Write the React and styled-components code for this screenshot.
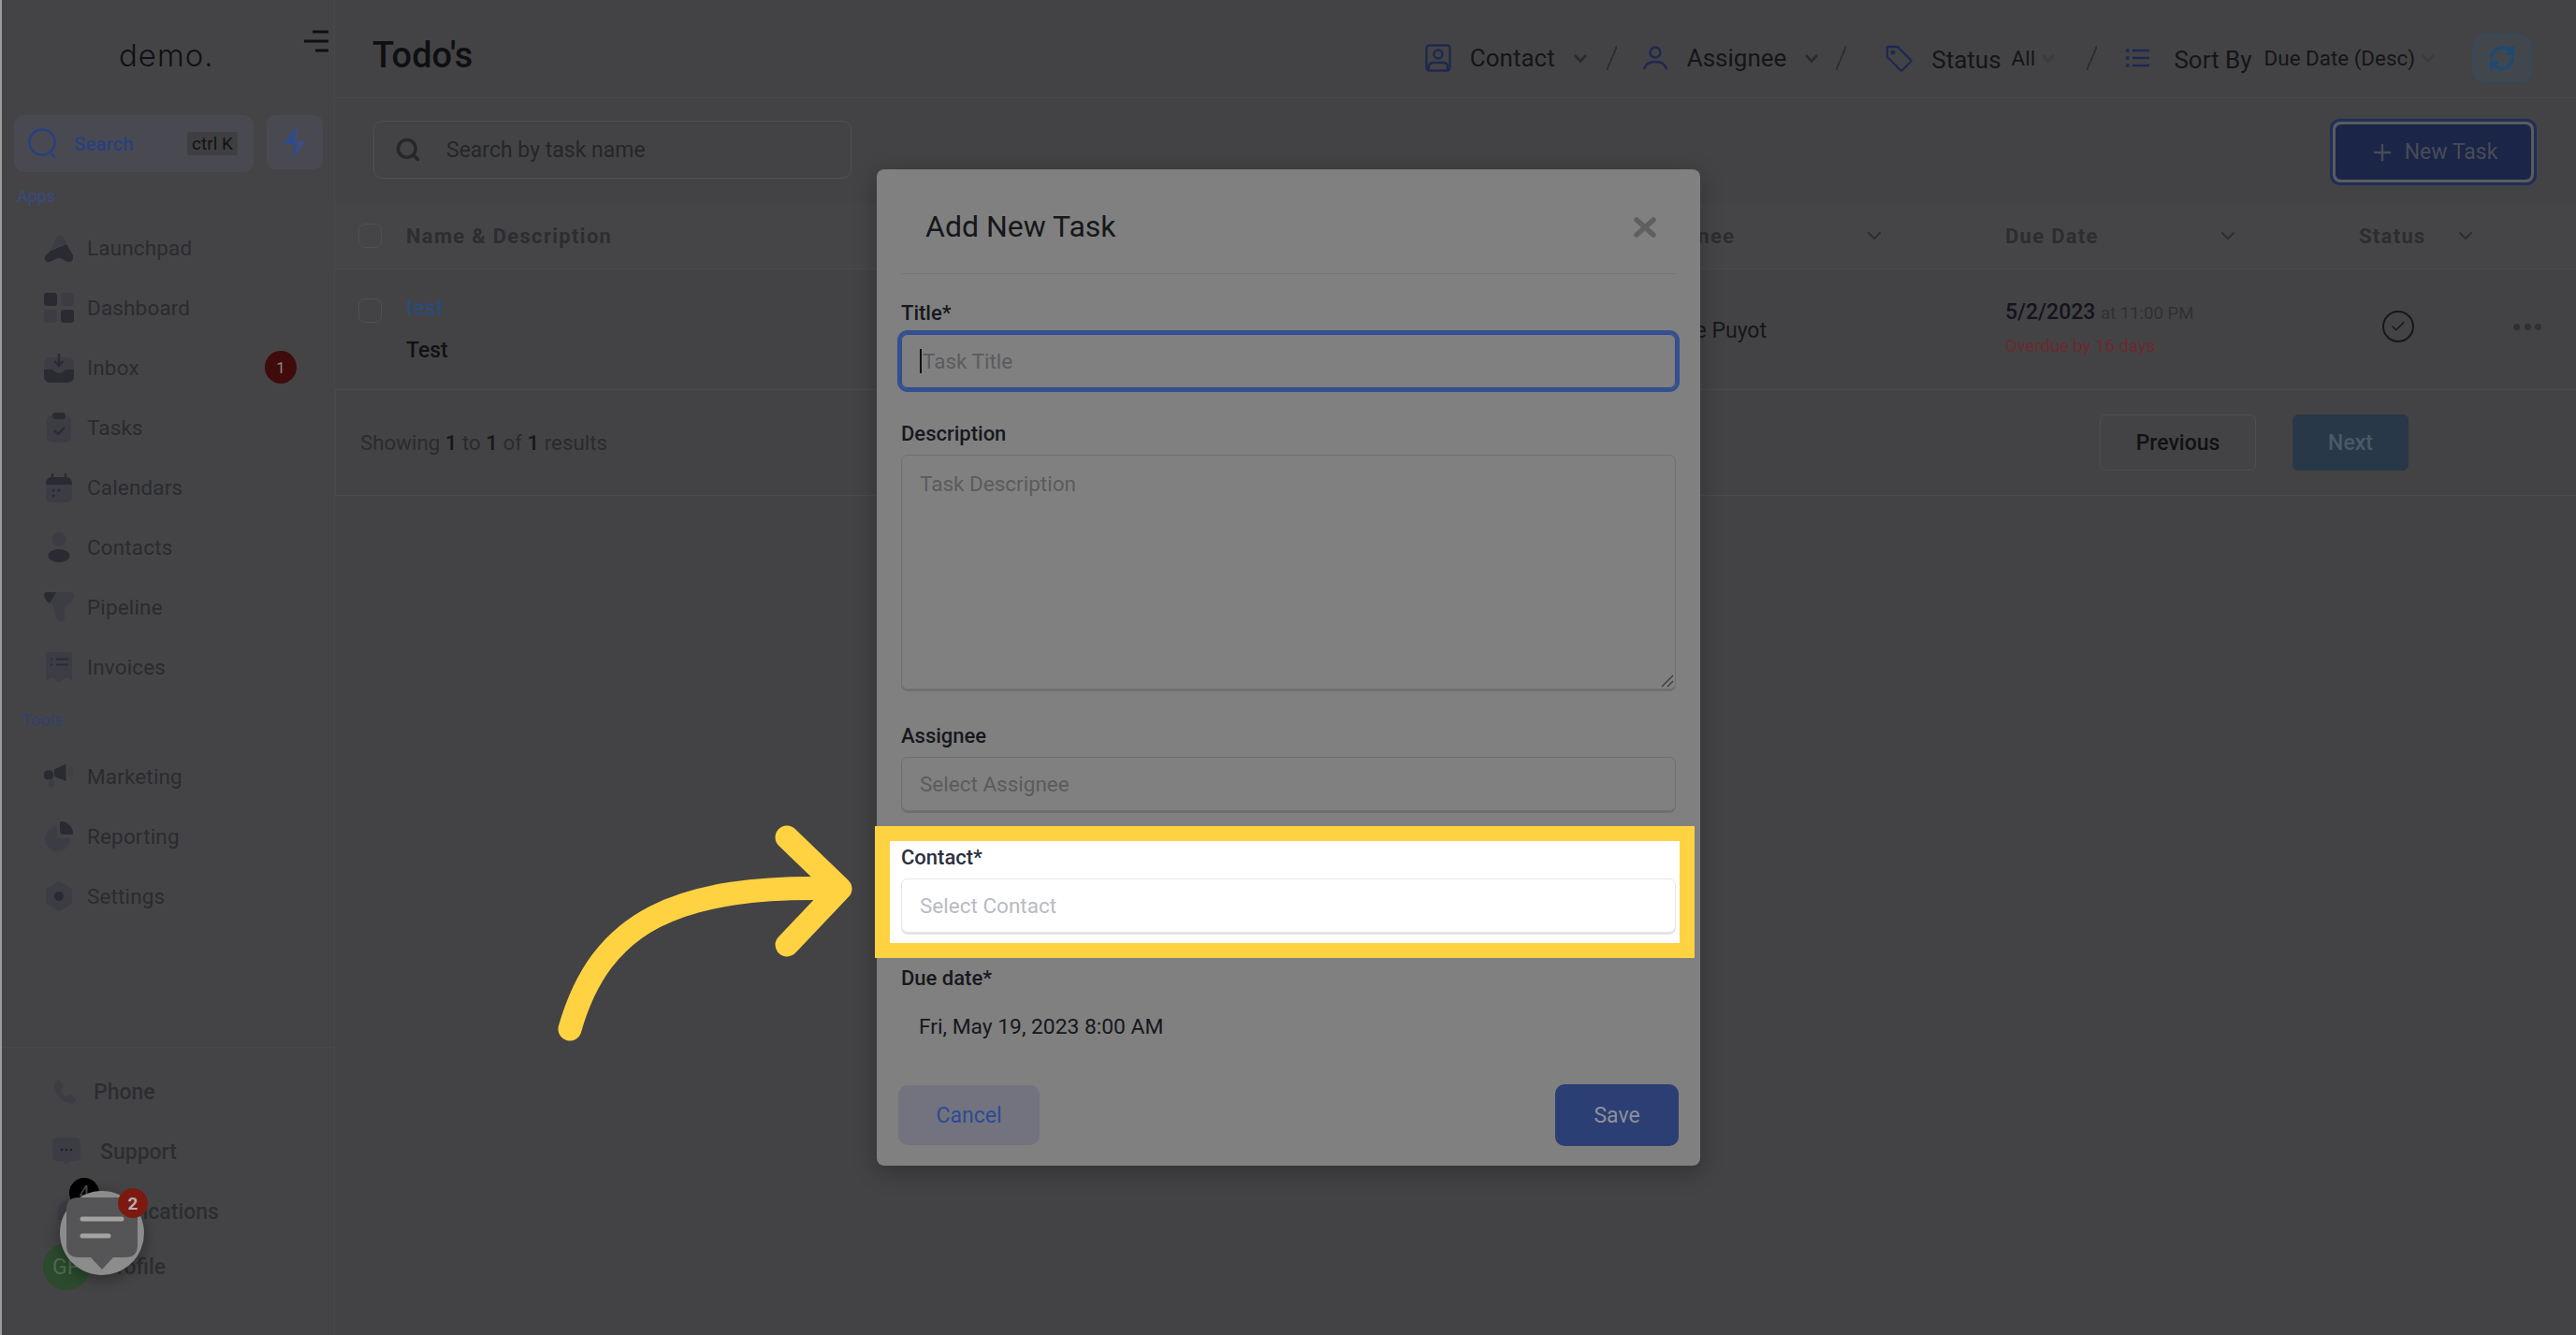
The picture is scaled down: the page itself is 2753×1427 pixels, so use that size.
import React from "react";
import styled, { createGlobalStyle } from "styled-components";
import { ChevronDown, RefreshCw, Search as SearchGlyph, Plus, Check } from "lucide-react";

const Global = createGlobalStyle`
  html, body { margin: 0; padding: 0; background: #434345; }
  * { box-sizing: border-box; }
  body { font-family: Roboto, "Liberation Sans", sans-serif; }
`;

const DARK = "#2a2b32";
const LIGHT = "#3c3d44";

const Root = styled.div`
  position: relative;
  width: 2753px;
  height: 1427px;
  display: flex;
  overflow: hidden;
  background: #434345;
  border-left: 2px solid #9c9c9c;
`;

/* ---------- sidebar ---------- */
const Sidebar = styled.aside`
  width: 356px;
  flex: none;
  display: flex;
  flex-direction: column;
  background: #444446;
  border-right: 1px solid #48484a;
`;
const LogoRow = styled.div`
  height: 104px;
  display: flex;
  align-items: flex-start;
  position: relative;
`;
const Logo = styled.div`
  margin: 31px 0 0 125px;
  font-family: Inter, sans-serif;
  font-weight: 300;
  font-size: 33px;
  line-height: 56px;
  height: 56px;
  color: #101012;
  letter-spacing: 1px;
`;
const MenuIcon = styled.svg`
  width: 26px;
  height: 24px;
  margin: 32px 0 0 0;
  position: absolute;
  left: 323px;
  top: 0;
`;
const SearchRow = styled.div`
  display: flex;
  gap: 14px;
  padding: 19px 0 0 13px;
  align-items: flex-start;
`;
const SearchPill = styled.div`
  width: 256px;
  height: 61px;
  display: flex;
  align-items: center;
  border-radius: 11px;
  background: #494a51;
  padding: 0 17px 0 15px;
`;
const SearchLabel = styled.span`
  margin-left: 18px;
  color: #28407f;
  font-size: 20.5px;
  font-weight: 500;
  flex: 1;
`;
const KeyHint = styled.span`
  width: 54px;
  height: 25px;
  border-radius: 3px;
  background: #3f3f41;
  color: #121214;
  font-size: 19px;
  display: flex;
  align-items: center;
  justify-content: center;
`;
const BoltButton = styled.div`
  width: 60px;
  height: 58px;
  border-radius: 9px;
  background: #494a51;
  display: flex;
  align-items: center;
  justify-content: center;
`;
const SectionLabel = styled.div`
  height: 24px;
  line-height: 24px;
  font-size: 18px;
  color: ${(p) => p.$color};
  margin: ${(p) => p.$top}px 0 ${(p) => p.$bottom}px ${(p) => p.$left}px;
`;
const NavItem = styled.div`
  height: 64px;
  display: flex;
  align-items: center;
  padding-left: 45px;
  gap: 14px;
  position: relative;
`;
const NavText = styled.span`
  font-size: 22.5px;
  font-weight: 400;
  color: #2a2b2f;
  letter-spacing: 0.15px;
`;
const IconBox = styled.span`
  width: 32px;
  height: 32px;
  display: flex;
  flex: none;
  align-items: center;
  justify-content: center;
`;
const CountBadge = styled.span`
  position: absolute;
  left: 281px;
  top: 14px;
  width: 34px;
  height: 35px;
  border-radius: 50%;
  background: #3f0b0b;
  color: #8c8585;
  font-size: 17px;
  display: flex;
  align-items: center;
  justify-content: center;
`;
const Spacer = styled.div`
  flex: 1;
`;
const BottomNav = styled.div`
  border-top: 1px solid #48484a;
  height: 308px;
  padding-top: 15px;
  display: flex;
  flex-direction: column;
`;
const BottomItem = styled.div`
  height: ${(p) => p.$height || 64}px;
  display: flex;
  align-items: center;
  padding-left: ${(p) => p.$left}px;
  gap: ${(p) => p.$gap}px;
  position: relative;
`;
const BottomText = styled.span`
  font-size: 23px;
  font-weight: 500;
  color: #2c2d31;
`;
const BellBadge = styled.span`
  position: absolute;
  left: 72px;
  top: -4px;
  width: 32px;
  height: 32px;
  border-radius: 50%;
  background: #000;
  color: #4c4c4e;
  font-size: 20px;
  display: flex;
  align-items: center;
  justify-content: center;
`;
const Avatar = styled.span`
  width: 50px;
  height: 50px;
  border-radius: 50%;
  background: #2b4a2e;
  color: #4f6a50;
  font-size: 23px;
  padding-left: 10px;
  display: flex;
  align-items: center;
  flex: none;
`;

/* ---------- main ---------- */
const Main = styled.main`
  flex: 1;
  display: flex;
  flex-direction: column;
  min-width: 0;
`;
const Header = styled.header`
  height: 105px;
  display: flex;
  align-items: flex-start;
  justify-content: space-between;
  padding: 0 47px 0 40px;
  border-bottom: 1px solid #48484a;
`;
const PageTitle = styled.h1`
  margin: 35px 0 0;
  font-size: 38px;
  line-height: 48px;
  font-weight: 500;
  color: #0f0f11;
`;
const FilterBar = styled.div`
  display: flex;
  align-items: center;
  height: 52px;
  margin-top: 36px;
`;
const Filter = styled.div`
  display: flex;
  align-items: center;
  gap: ${(p) => p.$gap || 20}px;
  margin-right: ${(p) => p.$after || 0}px;
`;
const FilterLabel = styled.span`
  font-size: 26px;
  color: #151517;
  margin-top: ${(p) => p.$dy || 0}px;
`;
const FilterValue = styled.span`
  font-size: 22.4px;
  color: #151517;
  margin-left: ${(p) => p.$left || 0}px;
`;
const Slash = styled.span`
  width: 11px;
  height: 26px;
  margin-right: ${(p) => p.$after}px;
  background: linear-gradient(to bottom right, transparent 46%, #2e2e31 46%, #2e2e31 56%, transparent 56%);
`;
const RefreshButton = styled.div`
  width: 64px;
  height: 52px;
  border-radius: 12px;
  border: 1.5px solid #2d4a68;
  background: #42474e;
  display: flex;
  align-items: center;
  justify-content: center;
  color: #1d4a75;
`;
const Toolbar = styled.div`
  height: 112px;
  display: flex;
  align-items: flex-start;
  justify-content: space-between;
  padding: 24px 42px 0 41px;
`;
const SearchField = styled.div`
  width: 511px;
  height: 62px;
  display: flex;
  align-items: center;
  gap: 27px;
  border: 1.5px solid #515154;
  border-radius: 10px;
  padding-left: 22px;
  font-size: 23px;
  color: #252629;
`;
const NewTask = styled.div`
  width: 221px;
  height: 71px;
  margin-top: -2px;
  border-radius: 11px;
  border: 3px solid #1f2d58;
  padding: 3px;
  background: #5b5b5d;
`;
const NewTaskInner = styled.div`
  height: 100%;
  border-radius: 6px;
  background: #1a2547;
  color: #484b58;
  font-size: 23px;
  display: flex;
  align-items: center;
  justify-content: center;
  gap: 10px;
`;
const TableGrid = styled.div`
  display: grid;
  grid-template-columns: 76px 1318px 391px 378px 1fr;
  align-items: center;
  position: relative;
`;
const TableHead = styled(TableGrid)`
  height: 71px;
  background: #454547;
  border-bottom: 1px solid #4a4a4c;
`;
const TableRow = styled(TableGrid)`
  height: 129px;
  border-bottom: 1px solid #4a4a4c;
`;
const Box = styled.span`
  display: block;
  width: 25px;
  height: 26px;
  border-radius: 7px;
  border: 1.5px solid #505053;
  margin-left: 25px;
  margin-top: ${(p) => p.$dy || 0}px;
`;
const HeadCell = styled.div`
  display: flex;
  align-items: center;
  justify-content: ${(p) => (p.$spread ? "space-between" : "flex-start")};
  gap: 30px;
  padding-right: ${(p) => (p.$spread ? 128 : 0)}px;
  font-size: 22px;
  font-weight: 700;
  letter-spacing: 1.3px;
  color: #2c2d31;
`;
const NameCell = styled.div`
  display: flex;
  flex-direction: column;
  gap: 16px;
  margin-top: -1px;
`;
const TaskLink = styled.span`
  font-size: 23px;
  line-height: 29px;
  font-weight: 500;
  color: #2c4a76;
`;
const TaskDesc = styled.span`
  font-size: 23px;
  line-height: 29px;
  font-weight: 500;
  color: #111113;
`;
const PlainCell = styled.div`
  font-size: 23px;
  font-weight: 400;
  color: #17171a;
  margin-top: 2px;
  padding-left: 12px;
`;
const DueCell = styled.div`
  display: flex;
  flex-direction: column;
  gap: 11px;
  margin-top: -1px;
`;
const DueLine = styled.div`
  font-size: 23px;
  line-height: 24px;
  font-weight: 500;
  color: #14141c;
`;
const DueTime = styled.span`
  font-size: 18.5px;
  font-weight: 400;
  color: #2f3034;
`;
const Overdue = styled.div`
  font-size: 18.5px;
  line-height: 24px;
  color: #6b2a2e;
`;
const StatusCell = styled.div`
  display: flex;
  align-items: center;
  justify-content: space-between;
  padding: 0 37px 0 25px;
  margin-top: -6px;
`;
const StatusCircle = styled.span`
  width: 34px;
  height: 34px;
  border-radius: 50%;
  border: 2px solid #17171a;
  display: flex;
  align-items: center;
  justify-content: center;
  color: #17171a;
`;
const Dots = styled.span`
  display: flex;
  gap: 4.5px;
  & > i {
    display: block;
    width: 7px;
    height: 7px;
    border-radius: 50%;
    background: #2f3034;
  }
`;
const TableFoot = styled.div`
  height: 113px;
  display: flex;
  align-items: center;
  justify-content: space-between;
  padding: 0 179px 0 26px;
  border-left: 1px solid #48484a;
  border-bottom: 1px solid #4a4a4c;
`;
const ResultText = styled.span`
  font-size: 22.3px;
  color: #2a2b2f;
  & > b {
    font-weight: 500;
    color: #17171a;
  }
`;
const Pager = styled.div`
  display: flex;
  gap: 39px;
`;
const PageButton = styled.div`
  width: ${(p) => p.$w}px;
  height: 60px;
  border-radius: 6px;
  font-size: 23px;
  font-weight: 500;
  display: flex;
  align-items: center;
  justify-content: center;
  background: ${(p) => (p.$primary ? "#283848" : "transparent")};
  border: 1.5px solid ${(p) => (p.$primary ? "#283848" : "#4e4e52")};
  color: ${(p) => (p.$primary ? "#4c5866" : "#111113")};
`;

/* ---------- modal ---------- */
const Modal = styled.section`
  position: absolute;
  left: 935px;
  top: 181px;
  width: 880px;
  height: 1065px;
  background: #808080;
  border-radius: 8px;
  box-shadow: 0 6px 24px rgba(0, 0, 0, 0.28);
  padding: 0 26px;
`;
const ModalHead = styled.div`
  height: 112px;
  border-bottom: 1px solid #767676;
  display: flex;
  align-items: center;
  justify-content: space-between;
  padding: 0 21px 0 26px;
`;
const ModalTitle = styled.h2`
  margin: 10px 0 0;
  font-size: 32px;
  font-weight: 400;
  color: #16171a;
`;
const CloseIcon = styled.svg`
  width: 24px;
  height: 22px;
  margin-top: 12px;
`;
const Field = styled.div`
  position: relative;
  margin-top: ${(p) => p.$top}px;
  z-index: 0;
`;
const Label = styled.div`
  height: 30px;
  line-height: 30px;
  font-size: 22px;
  font-weight: 500;
  color: ${(p) => (p.$bright ? "#2d2f3d" : "#17181e")};
  margin-bottom: 7px;
`;
const Control = styled.div`
  height: ${(p) => p.$height || 58}px;
  display: flex;
  align-items: ${(p) => (p.$multi ? "flex-start" : "center")};
  padding: ${(p) => (p.$multi ? "17px 19px" : "0 19px")};
  border-radius: 7px;
  position: relative;
  font-size: 22.5px;
  color: ${(p) => (p.$bright ? "#b9bbc2" : "#5b5b5d")};
  background: ${(p) => (p.$bright ? "#fff" : "transparent")};
  border: 1.5px solid ${(p) => (p.$bright ? "#e5e6eb" : "#6f6f71")};
  box-shadow: 0 2px 0 ${(p) => (p.$bright ? "#e3e4ea" : "#6f6f71")};
  ${(p) =>
    p.$focus &&
    `border: 1.5px solid #2f4a92; box-shadow: 0 0 0 4px #34508f;`}
`;
const Caret = styled.span`
  width: 2px;
  height: 26px;
  background: #111;
  margin-right: 1px;
`;
const Grip = styled.svg`
  position: absolute;
  right: 1px;
  bottom: 1px;
  width: 14px;
  height: 14px;
`;
const DateValue = styled.div`
  height: 58px;
  display: flex;
  align-items: center;
  padding-left: 19px;
  font-size: 22.8px;
  color: #16171b;
`;
const Highlight = styled.div`
  position: absolute;
  left: -28px;
  top: -19px;
  width: 876px;
  height: 141px;
  border: 16px solid #ffd242;
  background: #fff;
  z-index: -1;
`;
const ModalFoot = styled.div`
  display: flex;
  justify-content: space-between;
  align-items: center;
  margin: 33px -3px 0;
`;
const ModalButton = styled.div`
  width: ${(p) => p.$w}px;
  height: ${(p) => p.$h}px;
  border-radius: 10px;
  font-size: 23px;
  display: flex;
  align-items: center;
  justify-content: center;
  background: ${(p) => (p.$primary ? "#2c3f74" : "#72737e")};
  color: ${(p) => (p.$primary ? "#8c8f9c" : "#2d4a96")};
`;

/* ---------- overlays ---------- */
const Arrow = styled.svg`
  position: absolute;
  left: 0;
  top: 0;
  width: 2753px;
  height: 1427px;
  pointer-events: none;
`;
const ChatWidget = styled.div`
  position: absolute;
  left: 62px;
  top: 1273px;
  width: 90px;
  height: 90px;
  border-radius: 50%;
  background: #8c8c8c;
  box-shadow: 0 4px 16px rgba(0, 0, 0, 0.35);
`;
const ChatBadge = styled.span`
  position: absolute;
  left: 62px;
  top: -3px;
  width: 32px;
  height: 32px;
  border-radius: 50%;
  background: #7c1a12;
  color: #b8b0ae;
  font-size: 19px;
  font-weight: 700;
  display: flex;
  align-items: center;
  justify-content: center;
`;

/* ---------- icons ---------- */
const Ico = ({ children, w = 32, h = 32 }) => (
  <svg width={w} height={h} viewBox="0 0 32 32" fill="none">{children}</svg>
);
const LaunchIcon = () => (
  <Ico>
    <path d="M11 9 Q16 -1 21 5 L24 11 L8 17Z" fill={LIGHT} />
    <path d="M7 19 L24 12 L31 24 Q32 31 26 31 Q23 31 20 28 Q16 26 12 28 Q8 31 5 31 Q0 31 1 25Z" fill={DARK} />
  </Ico>
);
const DashIcon = () => (
  <Ico>
    <rect x="0" y="0" width="14" height="14" rx="3" fill={DARK} />
    <rect x="18" y="0" width="14" height="14" rx="3" fill={LIGHT} />
    <rect x="0" y="18" width="14" height="14" rx="3" fill={LIGHT} />
    <rect x="18" y="18" width="14" height="14" rx="3" fill={DARK} />
  </Ico>
);
const InboxIcon = () => (
  <Ico>
    <rect x="0" y="5" width="32" height="27" rx="7" fill={LIGHT} />
    <path d="M0 18 H9 Q16 26 23 18 H32 V25 Q32 32 25 32 H7 Q0 32 0 25Z" fill={DARK} />
    <path d="M16 1 V13 M11.5 9 L16 14 L20.5 9" stroke={DARK} strokeWidth="2.4" />
  </Ico>
);
const TaskIcon = () => (
  <Ico>
    <rect x="3" y="3" width="26" height="29" rx="6" fill={LIGHT} />
    <rect x="9" y="0" width="14" height="7" rx="3.5" fill={DARK} />
    <path d="M11 19 L15 23 L22 16" stroke={DARK} strokeWidth="2.2" />
  </Ico>
);
const CalIcon = () => (
  <Ico>
    <rect x="2" y="10" width="28" height="22" rx="5" fill={LIGHT} />
    <path d="M2 13 Q2 5 8 5 H24 Q30 5 30 13Z" fill={DARK} />
    <path d="M9 1 V7 M23 1 V7" stroke={DARK} strokeWidth="2.5" />
    <circle cx="10" cy="19" r="1.5" fill={DARK} /><circle cx="16" cy="19" r="1.5" fill={DARK} /><circle cx="10" cy="25" r="1.5" fill={DARK} />
  </Ico>
);
const ContactIcon = () => (
  <Ico>
    <circle cx="16" cy="7.5" r="7.5" fill={LIGHT} />
    <ellipse cx="16" cy="25" rx="11.5" ry="7" fill={DARK} />
  </Ico>
);
const PipeIcon = () => (
  <Ico>
    <path d="M3 0 H30 Q32 0 32 4 Q32 9 22 16 V29 Q19 33 15 30 Q12 28 12 20 Z" fill={LIGHT} />
    <path d="M3 0 H13 L6 12 Q0 7 0 3 Q0 0 3 0Z" fill={DARK} />
  </Ico>
);
const InvoiceIcon = () => (
  <Ico>
    <path d="M5 0 H27 Q30 0 30 4 V30 L24 27 L16 32 L9 27 L2 30 V4 Q2 0 5 0Z" fill={LIGHT} />
    <path d="M7 7.5 H9 M13 7.5 H26 M7 13.5 H9 M13 13.5 H26" stroke={DARK} strokeWidth="2.2" />
  </Ico>
);
const MegaIcon = () => (
  <svg width="38" height="32" viewBox="0 0 38 32" fill="none">
    <rect x="0" y="8" width="12" height="12" rx="5" fill={DARK} />
    <path d="M13 7 L28 0 V22 L13 16Z" fill={DARK} />
    <rect x="6" y="20" width="7" height="10" rx="3.5" fill={LIGHT} />
    <path d="M31 6 Q34 11 31 16 M34 3 Q38 11 34 19" stroke={LIGHT} strokeWidth="1.4" />
  </svg>
);
const ReportIcon = () => (
  <Ico>
    <path d="M14 5 A13.5 13.5 0 1 0 28 18 L14 18Z" fill={LIGHT} />
    <path d="M18 0 A13 13 0 0 1 31 12 Q31 14 28 14 H21 Q17 14 17 10 V1Z" fill={DARK} />
  </Ico>
);
const GearIcon = () => (
  <Ico>
    <path d="M16 0 L30 8 V24 L16 32 L2 24 V8Z" fill={LIGHT} />
    <circle cx="16" cy="16" r="5" fill={DARK} />
  </Ico>
);
const PhoneIcon = () => (
  <svg width="26" height="26" viewBox="0 0 24 24">
    <path d="M5 1 C7 0 8 1 9 3 L10.5 6.5 C11 8 10 9 9 10 C8.5 11 9 12 10 14 C11.5 16 13 17 14 17 C15 17 16 15 17.5 15 C19 15 21 16.5 22.5 18 C24 20 23 22 21 23 C18 24.5 14 23 10 20 C5 16 2 11 2 7 C2 4 3 2 5 1Z" fill={LIGHT} />
  </svg>
);
const SupportIcon = () => (
  <svg width="30" height="30" viewBox="0 0 30 30" fill="none">
    <path d="M6 0 H24 Q30 0 30 6 V19 Q30 25 24 25 H19 L15 29 L11 25 H6 Q0 25 0 19 V6 Q0 0 6 0Z" fill={LIGHT} />
    <circle cx="10" cy="13" r="1.3" fill="#202126" /><circle cx="15" cy="13" r="1.3" fill="#202126" /><circle cx="20" cy="13" r="1.3" fill="#202126" />
  </svg>
);
const BellIcon = () => (
  <svg width="20" height="24" viewBox="0 0 20 24" fill={LIGHT}>
    <path d="M10 0 Q18 1 18 11 V18 L20 21 H0 L2 18 V11 Q2 1 10 0Z" />
  </svg>
);
const NAVY = "#1f2850";
const CardUserIcon = () => (
  <svg width="28" height="30" viewBox="0 0 28 30" fill="none" stroke={NAVY} strokeWidth="2.4">
    <rect x="1.5" y="1.5" width="25" height="27" rx="3" />
    <circle cx="14" cy="11" r="4.5" />
    <path d="M4 27 V24 Q4 20 9 20 H19 Q24 20 24 24 V27" />
  </svg>
);
const UserIcon = () => (
  <svg width="28" height="26" viewBox="0 0 28 26" fill="none" stroke={NAVY} strokeWidth="2.4">
    <circle cx="14" cy="7" r="5.5" />
    <path d="M2 25 Q4 17 14 17 Q24 17 26 25" />
  </svg>
);
const TagIcon = () => (
  <svg width="30" height="30" viewBox="0 0 30 30" fill="none" stroke={NAVY} strokeWidth="2.4" strokeLinejoin="round">
    <path d="M3 3 H14 L28 17 Q29 18 28 19 L19 28 Q18 29 17 28 L3 14Z" />
    <circle cx="9" cy="9" r="1.3" fill={NAVY} />
  </svg>
);
const ListIcon = () => (
  <svg width="25" height="20" viewBox="0 0 25 20" fill="none" stroke={NAVY} strokeWidth="2.6">
    <path d="M7 2 H25 M7 10 H25 M7 18 H25" />
    <path d="M0 2 H3.4 M0 10 H3.4 M0 18 H3.4" strokeWidth="3.4" />
  </svg>
);
const Chev = ({ c = "#2a2b30" }) => (
  <svg width="14" height="9" viewBox="0 0 14 9" fill="none" stroke={c} strokeWidth="2.8">
    <path d="M1 1 L7 7.5 L13 1" />
  </svg>
);

const App = () => {
  const apps = [
    ["Launchpad", <LaunchIcon />],
    ["Dashboard", <DashIcon />],
    ["Inbox", <InboxIcon />, 1],
    ["Tasks", <TaskIcon />],
    ["Calendars", <CalIcon />],
    ["Contacts", <ContactIcon />],
    ["Pipeline", <PipeIcon />],
    ["Invoices", <InvoiceIcon />],
  ];
  const tools = [
    ["Marketing", <MegaIcon />],
    ["Reporting", <ReportIcon />],
    ["Settings", <GearIcon />],
  ];
  const navRow = ([name, icon, count]) => (
    <NavItem key={name}>
      <IconBox>{icon}</IconBox>
      <NavText>{name}</NavText>
      {count ? <CountBadge>{count}</CountBadge> : null}
    </NavItem>
  );
  return (
    <Root>
      <Global />
      <Sidebar>
        <LogoRow>
          <Logo>demo.</Logo>
          <MenuIcon viewBox="0 0 26 24" fill="none" stroke="#101012" strokeWidth="2.8">
            <path d="M9 2 H26 M0 12 H26 M12 22 H26" />
          </MenuIcon>
        </LogoRow>
        <SearchRow>
          <SearchPill>
            <svg width="31" height="34" viewBox="0 0 31 34" fill="none" stroke="#28407f" strokeWidth="2.6">
              <circle cx="15" cy="15" r="13.5" />
              <path d="M25 27 L29 32" />
            </svg>
            <SearchLabel>Search</SearchLabel>
            <KeyHint>ctrl K</KeyHint>
          </SearchPill>
          <BoltButton>
            <svg width="24" height="34" viewBox="0 0 24 34" fill="none">
              <path d="M14 0 L0 19 H11 Z" fill="#2f4a8a" />
              <path d="M14 0 L11 19 V34 L24 16 H14Z" fill="#3f4d78" />
              <path d="M11 19 L14 12 V25 L11 34Z" fill="#2f4a8a" />
            </svg>
          </BoltButton>
        </SearchRow>
        <SectionLabel $color="#3a4a80" $top={14} $bottom={11} $left={16}>Apps</SectionLabel>
        {apps.map(navRow)}
        <SectionLabel $color="#323f70" $top={13} $bottom={16} $left={21}>Tools</SectionLabel>
        {tools.map(navRow)}
        <Spacer />
        <BottomNav>
          <BottomItem $left={54} $gap={18}>
            <PhoneIcon />
            <BottomText>Phone</BottomText>
          </BottomItem>
          <BottomItem $left={54} $gap={21}>
            <SupportIcon />
            <BottomText>Support</BottomText>
          </BottomItem>
          <BottomItem $left={58} $gap={22}>
            <BellIcon />
            <BellBadge>4</BellBadge>
            <BottomText>Notifications</BottomText>
          </BottomItem>
          <BottomItem $left={44} $gap={14} $height={54}>
            <Avatar>GP</Avatar>
            <BottomText>Profile</BottomText>
          </BottomItem>
        </BottomNav>
      </Sidebar>

      <Main>
        <Header>
          <PageTitle>Todo's</PageTitle>
          <FilterBar>
            <Filter $after={21}>
              <CardUserIcon />
              <FilterLabel>Contact</FilterLabel>
              <Chev />
            </Filter>
            <Slash $after={27} />
            <Filter $after={19}>
              <UserIcon />
              <FilterLabel>Assignee</FilterLabel>
              <Chev />
            </Filter>
            <Slash $after={41} />
            <Filter $gap={7} $after={34}>
              <TagIcon />
              <FilterLabel $dy={4}>&nbsp;&nbsp;Status</FilterLabel>
              <FilterValue $left={4}>All</FilterValue>
              <Chev c="#3a3b40" />
            </Filter>
            <Slash $after={31} />
            <Filter $gap={7} $after={40}>
              <ListIcon />
              <FilterLabel $dy={4}>&nbsp;&nbsp;&nbsp;Sort By</FilterLabel>
              <FilterValue $left={6}>Due Date (Desc)</FilterValue>
              <Chev c="#3a3b40" />
            </Filter>
            <RefreshButton>
              <RefreshCw size={30} strokeWidth={2.6} />
            </RefreshButton>
          </FilterBar>
        </Header>

        <Toolbar>
          <SearchField>
            <SearchGlyph size={28} color="#26272b" strokeWidth={3} />
            Search by task name
          </SearchField>
          <NewTask>
            <NewTaskInner>
              <Plus size={28} strokeWidth={2} />
              New Task
            </NewTaskInner>
          </NewTask>
        </Toolbar>

        <TableHead>
          <Box />
          <HeadCell>Name &amp; Description</HeadCell>
          <HeadCell $spread>
            Assignee
            <ChevronDown size={24} strokeWidth={2} />
          </HeadCell>
          <HeadCell $spread>
            Due Date
            <ChevronDown size={24} strokeWidth={2} />
          </HeadCell>
          <HeadCell>
            Status
            <ChevronDown size={24} strokeWidth={2} />
          </HeadCell>
        </TableHead>
        <TableRow>
          <Box $dy={-41} />
          <NameCell>
            <TaskLink>test</TaskLink>
            <TaskDesc>Test</TaskDesc>
          </NameCell>
          <PlainCell>Grace Puyot</PlainCell>
          <DueCell>
            <DueLine>
              5/2/2023 <DueTime>at 11:00 PM</DueTime>
            </DueLine>
            <Overdue>Overdue by 16 days</Overdue>
          </DueCell>
          <StatusCell>
            <StatusCircle>
              <Check size={18} strokeWidth={2} />
            </StatusCircle>
            <Dots>
              <i />
              <i />
              <i />
            </Dots>
          </StatusCell>
        </TableRow>
        <TableFoot>
          <ResultText>
            Showing <b>1</b> to <b>1</b> of <b>1</b> results
          </ResultText>
          <Pager>
            <PageButton $w={167}>Previous</PageButton>
            <PageButton $w={124} $primary>Next</PageButton>
          </Pager>
        </TableFoot>
      </Main>

      <Modal>
        <ModalHead>
          <ModalTitle>Add New Task</ModalTitle>
          <CloseIcon viewBox="0 0 24 22" fill="none" stroke="#5f5f5f" strokeWidth="5.5" strokeLinecap="round">
            <path d="M3 3 L21 19 M21 3 L3 19" />
          </CloseIcon>
        </ModalHead>
        <Field $top={27}>
          <Label>Title*</Label>
          <Control $focus>
            <Caret />
            Task Title
          </Control>
        </Field>
        <Field $top={34}>
          <Label>Description</Label>
          <Control $multi $height={251}>
            Task Description
            <Grip viewBox="0 0 14 14" fill="none" stroke="#3c3c3e" strokeWidth="1.4">
              <path d="M1 13 L13 1 M7 13 L13 7" />
            </Grip>
          </Control>
        </Field>
        <Field $top={35}>
          <Label>Assignee</Label>
          <Control>Select Assignee</Control>
        </Field>
        <Field $top={35}>
          <Highlight />
          <Label $bright>Contact*</Label>
          <Control $bright>Select Contact</Control>
        </Field>
        <Field $top={34}>
          <Label>Due date*</Label>
          <DateValue>Fri, May 19, 2023 8:00 AM</DateValue>
        </Field>
        <ModalFoot>
          <ModalButton $w={151} $h={64}>Cancel</ModalButton>
          <ModalButton $w={132} $h={66} $primary>Save</ModalButton>
        </ModalFoot>
      </Modal>

      <Arrow viewBox="0 0 2753 1427" fill="none" stroke="#ffd242" strokeWidth="25" strokeLinecap="round" strokeLinejoin="round">
        <path d="M607 1100 C 640 985, 720 945, 895 950" />
        <path d="M839 895 L 896 950 L 839 1010" />
      </Arrow>

      <ChatWidget>
        <svg width="90" height="90" viewBox="0 0 90 90" fill="none">
          <path d="M20 7 H70 Q83 7 83 20 V58 Q83 71 70 71 H57 L45 84 L33 71 H20 Q7 71 7 58 V20 Q7 7 20 7Z" fill="#555557" />
          <path d="M24 30 H66 M24 48 H52" stroke="#a3a3a3" strokeWidth="5" strokeLinecap="round" />
        </svg>
        <ChatBadge>2</ChatBadge>
      </ChatWidget>
    </Root>
  );
};

export default App;
